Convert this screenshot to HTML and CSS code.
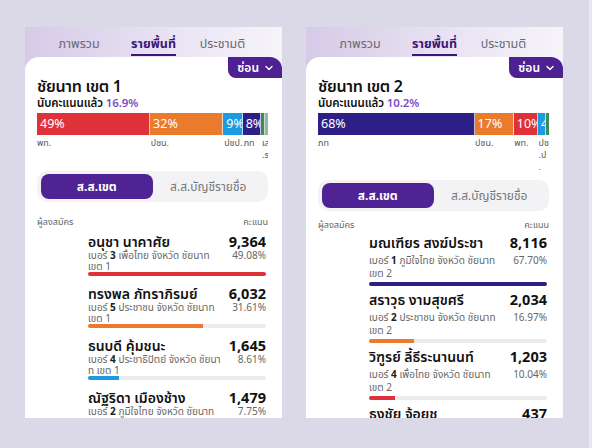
FILE: index.html
```html
<!DOCTYPE html>
<html lang="th">
<head>
<meta charset="utf-8">
<title>ผลเลือกตั้ง ชัยนาท</title>
<link rel="stylesheet" href="styles.css">
</head>
<body>
<main class="stage">
  <section class="card">
    <nav class="tabs">
      <span class="tab">ภาพรวม</span>
      <span class="tab tab--active">รายพื้นที่</span>
      <span class="tab">ประชามติ</span>
    </nav>
    <div class="panel">
      <button class="hide-btn">ซ่อน <svg width="10" height="10" viewBox="0 0 10 10"><path d="M2 3.5 L5 6.5 L8 3.5" fill="none" stroke="#fff" stroke-width="1.4" stroke-linecap="round" stroke-linejoin="round"/></svg></button>
      <h1 class="title">ชัยนาท เขต 1</h1>
      <p class="counted">นับคะแนนแล้ว <span class="counted-pct">16.9%</span></p>
      <div class="seats">
        <div class="seg seg--red" style="width:49.5%">49%</div>
        <div class="seg seg--orange" style="width:32%">32%</div>
        <div class="seg seg--blue" style="width:8.5%">9%</div>
        <div class="seg seg--navy" style="width:8%">8%</div>
        <div class="seg seg--green" style="width:1%"></div>
        <div class="seg seg--grey" style="width:1%"></div>
      </div>
      <div class="seat-labels seat-labels--two">
        <span class="lbl" style="width:49.5%">พท.</span>
        <span class="lbl" style="width:32%">ปชน.</span>
        <span class="lbl" style="width:8.5%">ปชป.</span>
        <span class="lbl" style="width:8%">ภท</span>
        <span class="lbl lbl--clip" style="width:2.6%">เส<br>.ร</span>
      </div>
      <div class="toggle">
        <span class="toggle-opt toggle-opt--active">ส.ส.เขต</span>
        <span class="toggle-opt">ส.ส.บัญชีรายชื่อ</span>
      </div>
      <div class="list-head"><span>ผู้ลงสมัคร</span><span>คะแนน</span></div>
      <ul class="cands">
        <li class="cand">
          <div class="cand-top"><span class="cand-name">อนุชา นาคาศัย</span><span class="cand-votes">9,364</span></div>
          <div class="cand-mid"><span class="cand-info">เบอร์ <b>3</b> เพื่อไทย จังหวัด ชัยนาท<br>เขต 1</span><span class="cand-pct">49.08%</span></div>
          <div class="track"><div class="fill seg--red" style="width:100%"></div></div>
        </li>
        <li class="cand">
          <div class="cand-top"><span class="cand-name">ทรงพล ภัทราภิรมย์</span><span class="cand-votes">6,032</span></div>
          <div class="cand-mid"><span class="cand-info">เบอร์ <b>5</b> ประชาชน จังหวัด ชัยนาท<br>เขต 1</span><span class="cand-pct">31.61%</span></div>
          <div class="track"><div class="fill seg--orange" style="width:64.4%"></div></div>
        </li>
        <li class="cand">
          <div class="cand-top"><span class="cand-name">ธนบดี คุ้มชนะ</span><span class="cand-votes">1,645</span></div>
          <div class="cand-mid"><span class="cand-info">เบอร์ <b>4</b> ประชาธิปัตย์ จังหวัด ชัยนา<br>ท เขต 1</span><span class="cand-pct">8.61%</span></div>
          <div class="track"><div class="fill seg--blue" style="width:17.6%"></div></div>
        </li>
        <li class="cand">
          <div class="cand-top"><span class="cand-name">ณัฐริดา เมืองช้าง</span><span class="cand-votes">1,479</span></div>
          <div class="cand-mid"><span class="cand-info">เบอร์ <b>2</b> ภูมิใจไทย จังหวัด ชัยนาท<br>เขต 1</span><span class="cand-pct">7.75%</span></div>
          <div class="track"><div class="fill seg--navy" style="width:15.8%"></div></div>
        </li>
      </ul>
    </div>
  </section>

  <section class="card card--loose">
    <nav class="tabs">
      <span class="tab">ภาพรวม</span>
      <span class="tab tab--active">รายพื้นที่</span>
      <span class="tab">ประชามติ</span>
    </nav>
    <div class="panel">
      <button class="hide-btn">ซ่อน <svg width="10" height="10" viewBox="0 0 10 10"><path d="M2 3.5 L5 6.5 L8 3.5" fill="none" stroke="#fff" stroke-width="1.4" stroke-linecap="round" stroke-linejoin="round"/></svg></button>
      <h1 class="title">ชัยนาท เขต 2</h1>
      <p class="counted">นับคะแนนแล้ว <span class="counted-pct">10.2%</span></p>
      <div class="seats">
        <div class="seg seg--navy" style="width:68%">68%</div>
        <div class="seg seg--orange" style="width:17%">17%</div>
        <div class="seg seg--red" style="width:10.5%">10%</div>
        <div class="seg seg--blue" style="width:3.5%">4%</div>
        <div class="seg seg--green" style="width:1%"></div>
      </div>
      <div class="seat-labels seat-labels--three">
        <span class="lbl" style="width:68%">ภท</span>
        <span class="lbl" style="width:17%">ปชน.</span>
        <span class="lbl" style="width:10.5%">พท.</span>
        <span class="lbl lbl--clip" style="width:4.5%">ปช<br>.ป<br>.</span>
      </div>
      <div class="toggle">
        <span class="toggle-opt toggle-opt--active">ส.ส.เขต</span>
        <span class="toggle-opt">ส.ส.บัญชีรายชื่อ</span>
      </div>
      <div class="list-head"><span>ผู้ลงสมัคร</span><span>คะแนน</span></div>
      <ul class="cands">
        <li class="cand">
          <div class="cand-top"><span class="cand-name">มณเฑียร สงฆ์ประชา</span><span class="cand-votes">8,116</span></div>
          <div class="cand-mid"><span class="cand-info">เบอร์ <b>1</b> ภูมิใจไทย จังหวัด ชัยนาท<br>เขต 2</span><span class="cand-pct">67.70%</span></div>
          <div class="track"><div class="fill seg--navy" style="width:100%"></div></div>
        </li>
        <li class="cand">
          <div class="cand-top"><span class="cand-name">สราวุธ งามสุขศรี</span><span class="cand-votes">2,034</span></div>
          <div class="cand-mid"><span class="cand-info">เบอร์ <b>2</b> ประชาชน จังหวัด ชัยนาท<br>เขต 2</span><span class="cand-pct">16.97%</span></div>
          <div class="track"><div class="fill seg--orange" style="width:25%"></div></div>
        </li>
        <li class="cand">
          <div class="cand-top"><span class="cand-name">วิฑูรย์ ลี้ธีระนานนท์</span><span class="cand-votes">1,203</span></div>
          <div class="cand-mid"><span class="cand-info">เบอร์ <b>4</b> เพื่อไทย จังหวัด ชัยนาท<br>เขต 2</span><span class="cand-pct">10.04%</span></div>
          <div class="track"><div class="fill seg--red" style="width:14.8%"></div></div>
        </li>
        <li class="cand">
          <div class="cand-top"><span class="cand-name">ธงชัย จ้อยชู</span><span class="cand-votes">437</span></div>
          <div class="cand-mid"><span class="cand-info">เบอร์ <b>3</b> ประชาธิปัตย์ จังหวัด ชัยนา<br>ท เขต 2</span><span class="cand-pct">3.65%</span></div>
          <div class="track"><div class="fill seg--blue" style="width:5.4%"></div></div>
        </li>
      </ul>
    </div>
  </section>
</main>
</body>
</html>
```
FILE: styles.css
```css
* { box-sizing: border-box; }
html, body { margin: 0; padding: 0; }
body {
  width: 592px;
  height: 448px;
  overflow: hidden;
  background: linear-gradient(to right, #dbd9e7 0, #dbd9e7 589px, #e9e7f1 589px);
  font-family: "Noto Sans", "Noto Sans Thai", "Noto Sans Thai UI", "DejaVu Sans", sans-serif;
  color: #111;
}
.stage {
  display: flex;
  gap: 24px;
  padding: 27px 0 0 25px;
}
.card {
  width: 257px;
  height: 391px;
  overflow: hidden;
  display: flex;
  flex-direction: column;
  background: linear-gradient(to right, #d6cbe7, #ece6f5 65%, #f6f4f9);
}
.tabs {
  height: 30px;
  flex: none;
  display: grid;
  grid-template-columns: 70px 79px 59px;
  justify-content: start;
  justify-items: center;
  align-items: end;
  padding: 0 0 1px 19px;
}
.tab {
  font-size: 12.5px;
  line-height: 16px;
  color: #6a6a72;
  padding-bottom: 2px;
  border-bottom: 2px solid transparent;
  white-space: nowrap;
}
.tab--active {
  color: #3b1778;
  font-weight: 700;
  border-bottom-color: #3b1778;
}
.panel {
  position: relative;
  flex: 1;
  background: #fff;
  border-radius: 14px 14px 0 0;
  padding: 20px 14px 0 12px;
}
.hide-btn {
  position: absolute;
  top: 0;
  right: 0;
  height: 21px;
  padding: 0 8px 0 9px;
  border: 0;
  border-radius: 0 12px 0 8px;
  background: #4d2191;
  color: #fff;
  font-family: inherit;
  font-size: 12px;
  font-weight: 600;
  display: flex;
  align-items: center;
  gap: 5px;
}
.title {
  margin: 0;
  font-size: 16px;
  line-height: 19px;
  font-weight: 600;
  letter-spacing: -0.3px;
}
.counted {
  margin: 0;
  font-size: 11.5px;
  line-height: 13px;
  font-weight: 600;
  letter-spacing: -0.1px;
}
.counted-pct { color: #7b4cc6; }
.seats {
  margin-top: 4px;
  display: flex;
  height: 22px;
  width: 231px;
}
.seg {
  height: 100%;
  color: #fff;
  font-size: 12.5px;
  line-height: 22px;
  padding-left: 3px;
  overflow: hidden;
  white-space: nowrap;
  border-right: 1px solid rgba(255,255,255,0.7);
}
.seg--red { background: #df3139; }
.seg--orange { background: #ea7b2c; }
.seg--blue { background: #1c9be0; }
.seg--navy { background: #2e1f86; }
.seg--green { background: #3f8a58; }
.seg--grey { background: #9ab3a2; }
.seats .seg:last-child { border-right: 0; }
.seat-labels {
  display: flex;
  width: 231px;
  font-size: 9px;
  line-height: 12px;
  color: #555;
  padding-top: 2px;
}
.seat-labels--two { height: 36px; }
.seat-labels--three { height: 45px; }
.lbl {
  white-space: nowrap;
  overflow: visible;
}
.lbl--clip { overflow: hidden; }
.toggle {
  width: 231px;
  height: 31px;
  background: #f3f3f5;
  border-radius: 10px;
  padding: 3px 4px;
  display: flex;
}
.toggle-opt {
  flex: 1;
  display: flex;
  align-items: center;
  justify-content: center;
  font-size: 12px;
  color: #777;
  border-radius: 8px;
}
.toggle-opt--active {
  background: #4f2394;
  color: #fff;
  font-weight: 700;
}
.list-head {
  margin-top: 14px;
  width: 231px;
  display: flex;
  justify-content: space-between;
  font-size: 9px;
  line-height: 12px;
  color: #666;
}
.cands {
  list-style: none;
  margin: 5px 0 0;
  padding: 0 2px 0 51px;
}
.cand { margin-bottom: 9px; }
.cand-top {
  display: flex;
  justify-content: space-between;
  align-items: baseline;
  font-size: 14px;
  line-height: 17px;
  font-weight: 600;
}
.cand-votes { font-weight: 700; font-size: 14.5px; }
.cand-mid {
  display: flex;
  justify-content: space-between;
  align-items: flex-start;
  font-size: 10px;
  line-height: 11px;
  color: #666;
}
.cand-info {
  white-space: nowrap;
}
.cand-info b { color: #222; }
.track {
  height: 4px;
  border-radius: 2px;
  background: #ececef;
  overflow: hidden;
}
.fill { height: 100%; }
.card--loose .list-head { margin-top: 8px; }
.card--loose .cands { margin-top: 3px; }
.card--loose .cand { margin-bottom: 5px; }
.card--loose .cand-mid { line-height: 13px; margin-top: 3px; }
.card--loose .track { margin-top: 2px; }
```
